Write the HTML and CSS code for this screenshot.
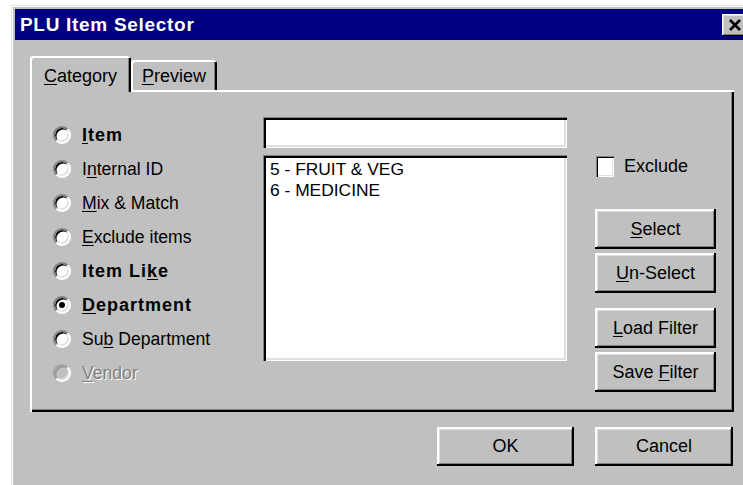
FILE: index.html
```html
<!DOCTYPE html>
<html lang="en">
<head>
<meta charset="utf-8">
<title>PLU Item Selector</title>
<link rel="stylesheet" href="styles.css">
</head>
<body>
<div class="window">
  <div class="titlebar">
    <span class="title">PLU Item Selector</span>
    <button class="close" aria-label="Close">
      <svg width="14" height="12" viewBox="0 0 14 12"><path d="M2 1 L12 11 M12 1 L2 11" stroke="#000" stroke-width="2.6" fill="none"/></svg>
    </button>
  </div>
  <div class="content">
    <div class="tabs">
      <div class="tab active"><u>C</u>ategory</div>
      <div class="tab"><u>P</u>review</div>
    </div>
    <div class="panel">
      <div class="options">
        <label class="option bold"><span class="radio"></span><span><u>I</u>tem</span></label>
        <label class="option"><span class="radio"></span><span>I<u>n</u>ternal ID</span></label>
        <label class="option"><span class="radio"></span><span><u>M</u>ix &amp; Match</span></label>
        <label class="option"><span class="radio"></span><span><u>E</u>xclude items</span></label>
        <label class="option bold"><span class="radio"></span><span>Item Li<u>k</u>e</span></label>
        <label class="option bold"><span class="radio checked"></span><span><u>D</u>epartment</span></label>
        <label class="option"><span class="radio"></span><span>Su<u>b</u> Department</span></label>
        <label class="option disabled"><span class="radio"></span><span><u>V</u>endor</span></label>
      </div>
      <div class="fields">
        <div class="field textbox"></div>
        <div class="field listbox">
          <div class="list-item">5 - FRUIT &amp; VEG</div>
          <div class="list-item">6 - MEDICINE</div>
        </div>
      </div>
      <div class="actions">
        <label class="check"><span class="checkbox"></span><span>Exclude</span></label>
        <div class="btn-group first">
          <button class="btn"><u>S</u>elect</button>
          <button class="btn"><u>U</u>n-Select</button>
        </div>
        <div class="btn-group">
          <button class="btn"><u>L</u>oad Filter</button>
          <button class="btn">Save <u>F</u>ilter</button>
        </div>
      </div>
    </div>
    <div class="footer">
      <button class="btn wide">OK</button>
      <button class="btn wide cancel">Cancel</button>
    </div>
  </div>
</div>
</body>
</html>
```
FILE: styles.css
```css
html, body {
  margin: 0;
  overflow: hidden;
  background: #fff;
}

body {
  font-family: "Liberation Sans", Arial, sans-serif;
  font-size: 17.6px;
  color: #000;
}

u {
  text-decoration: underline;
  text-underline-offset: 2px;
  text-decoration-thickness: 1px;
}

/* dialog frame */
.window {
  margin: 5px 0 0 11px;
  width: 742px;
  height: 500px;
  box-sizing: border-box;
  padding: 4px;
  background: #c0c0c0;
  box-shadow: inset 1px 1px 0 #dfdfdf, inset 2px 2px 0 #fff;
}

.titlebar {
  height: 31px;
  background: #000080;
  display: flex;
  align-items: center;
  justify-content: space-between;
  padding: 0 2px 0 5px;
}

.title {
  color: #fff;
  font-weight: bold;
  font-size: 19px;
  letter-spacing: 0.7px;
}

.close {
  width: 25px;
  height: 22px;
  padding: 0;
  border: 0;
  background: #c0c0c0;
  display: flex;
  align-items: center;
  justify-content: center;
  box-shadow: inset -1px -1px 0 #000, inset 1px 1px 0 #fff, inset -2px -2px 0 #808080, inset 2px 2px 0 #dfdfdf;
}

.content {
  padding: 16px 15px 0 15px;
}

/* tab strip */
.tabs {
  display: flex;
  align-items: flex-end;
  height: 34px;
}

.tab {
  box-sizing: border-box;
  height: 30px;
  padding-top: 6px;
  line-height: 21px;
  font-size: 18px;
  text-align: center;
  background: #c0c0c0;
  border-radius: 3px 3px 0 0;
  box-shadow: inset 2px 2px 0 #fff, inset -2px 0 0 #000, inset -3px 0 0 #808080;
  width: 86px;
}

.tab.active {
  position: relative;
  z-index: 1;
  width: 101px;
  height: 36px;
  padding-top: 10px;
  margin-bottom: -2px;
}

/* page of the tab control */
.panel {
  height: 322px;
  box-sizing: border-box;
  padding-left: 23px;
  display: grid;
  grid-template-columns: 210px 304px 121px;
  column-gap: 0;
  align-items: start;
  box-shadow: inset 2px 2px 0 #fff, inset -2px -2px 0 #000, inset -3px -3px 0 #808080;
}

.options {
  padding-top: 28px;
}

.option {
  display: flex;
  align-items: center;
  gap: 11px;
  height: 34px;
}

.option.bold {
  font-weight: bold;
  font-size: 18px;
  letter-spacing: 1px;
}

.option.disabled {
  color: #808080;
  text-shadow: 1px 1px 0 #fff;
}

.radio {
  position: relative;
  flex: none;
  width: 18px;
  height: 18px;
  box-sizing: border-box;
  border-radius: 50%;
  border: 2px solid;
  border-color: #808080 #fff #fff #808080;
  background: #fff;
  box-shadow: inset 1.5px 1.5px 0 #000, inset -1.5px -1.5px 0 #dfdfdf;
}

.radio.checked::after {
  content: "";
  position: absolute;
  left: 4px;
  top: 4px;
  width: 6px;
  height: 6px;
  border-radius: 50%;
  background: #000;
}

.option.disabled .radio {
  background: #c0c0c0;
  border-color: #a0a0a0 #fff #fff #a0a0a0;
  box-shadow: inset 1.5px 1.5px 0 #9a9a9a, inset -1.5px -1.5px 0 #dfdfdf;
}

/* sunken edit fields */
.fields {
  padding-top: 27px;
  display: flex;
  flex-direction: column;
  gap: 7px;
}

.field {
  background: #fff;
  box-sizing: border-box;
  box-shadow: inset 1px 1px 0 #808080, inset 3px 3px 0 #000, inset -1px -1px 0 #fff, inset -3px -3px 0 #dfdfdf;
}

.textbox {
  height: 31px;
}

.listbox {
  height: 206px;
  padding: 4px 0 0 7px;
  line-height: 21px;
  font-size: 17.4px;
}

/* right-hand column */
.actions {
  margin-left: 28px;
  padding-top: 65px;
  display: flex;
  flex-direction: column;
}

.check {
  display: flex;
  align-items: center;
  gap: 10px;
  height: 22px;
  margin-left: 1px;
  font-size: 18px;
}

.checkbox {
  width: 21px;
  height: 21px;
  box-sizing: border-box;
  background: #fff;
  box-shadow: inset 1px 1px 0 #808080, inset 2px 2px 0 #000, inset -1px -1px 0 #fff, inset -2px -2px 0 #dfdfdf;
}

.btn-group {
  display: flex;
  flex-direction: column;
  gap: 4px;
  margin-top: 15px;
}

.btn-group.first {
  margin-top: 32px;
}

.btn {
  height: 40px;
  width: 121px;
  padding: 0;
  border: 0;
  font-family: inherit;
  font-size: 18px;
  color: #000;
  background: #c0c0c0;
  box-shadow: inset -2px -2px 0 #000, inset 2px 2px 0 #fff, inset -3px -3px 0 #808080, inset 3px 3px 0 #dfdfdf;
}

/* OK / Cancel row */
.footer {
  display: flex;
  justify-content: flex-end;
  gap: 21px;
  margin-top: 15px;
  padding-right: 1px;
}

.btn.wide {
  width: 137px;
  height: 39px;
}

.btn.cancel {
  width: 138px;
}
```
